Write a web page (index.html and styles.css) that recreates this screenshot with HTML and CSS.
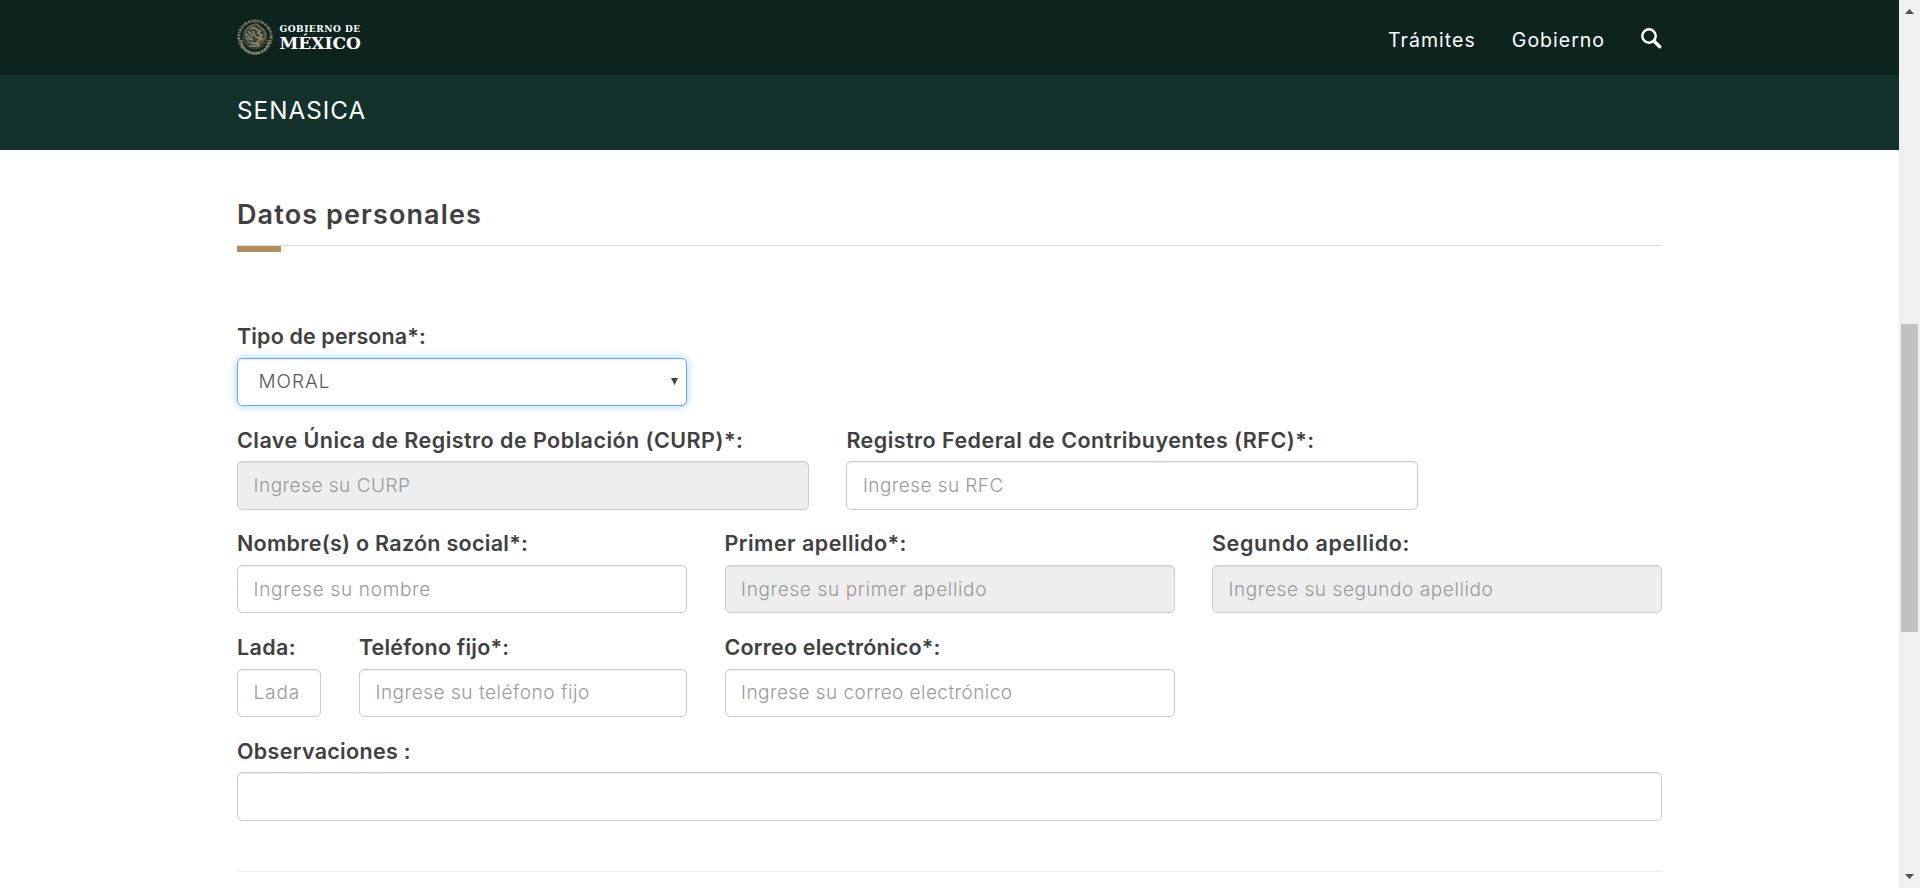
FILE: index.html
```html
<!DOCTYPE html>
<html lang="es">
<head>
<meta charset="utf-8">
<title>Datos personales</title>
<link rel="stylesheet" href="styles.css">
</head>
<body>
<div class="page">
  <header class="topbar">
    <div class="container topbar-in">
      <div class="brand">
        <svg class="seal" viewBox="0 0 36 36" fill="none">
          <circle cx="18" cy="18" r="12.500" fill="#3b4236"/>
          <circle cx="18" cy="18" r="16.200" stroke="#78755f" stroke-width="2.800" stroke-dasharray="2.100 .8 1.200 .6 3 .9"/>
          <path d="M4.500 21a13.500 13.500 0 0 0 27 0" stroke="#8c876e" stroke-width="2" stroke-dasharray="2.500 .9"/>
          <path d="M8 13c1-4 5-7 9-7 1-2 4-1 5 1l2 2c4 2 5 6 4 10l-3 4-4 2-5-1c-4 0-7-3-7-6z" stroke="#6e6c58" stroke-width="1.300"/>
          <path d="M13 10c3-2 6-1 7 1l3 1-2 2c3 1 4 4 2 7l-3 2 2 3M11 12l5 5M9 15l6 4M10 19l6 2M16 12l2 5 4 3M22 14l4 3M21 18l5 2M14 24l8 1M12 27h11" stroke="#8f8a70" stroke-width="1.500"/>
        </svg>
        <div class="wordmark"><span class="wm-small">GOBIERNO DE</span><span class="wm-big">MÉXICO</span></div>
      </div>
      <nav class="nav">
        <a class="nav-link">Trámites</a>
        <a class="nav-link nav-gob">Gobierno</a>
        <svg class="search" viewBox="0 0 21 21" fill="none" stroke="#fff"><circle cx="8" cy="8" r="6.700" stroke-width="2.500"/><path d="M13 13l5.700 5.700" stroke-width="3.400" stroke-linecap="round"/></svg>
      </nav>
    </div>
  </header>
  <div class="subbar"><div class="container subbar-in">SENASICA</div></div>
  <main class="container main">
    <h3 class="title">Datos personales</h3>
    <hr class="rule">
    <div class="accent"></div>
    <form class="form">
      <div class="field c4"><label class="label t-tipo">Tipo de persona*:</label>
        <div class="control focused"><span class="value">MORAL</span><svg class="arrow" viewBox="0 0 7 7"><path d="M0 0h7L3.500 7z" fill="#444"/></svg></div></div>
      <div class="field c5 first"><label class="label t-wide">Clave Única de Registro de Población (CURP)*:</label><input class="control s-5" disabled placeholder="Ingrese su CURP"></div>
      <div class="field c5"><label class="label t-wide">Registro Federal de Contribuyentes (RFC)*:</label><input class="control s-4" placeholder="Ingrese su RFC"></div>
      <div class="field c4 first"><label class="label t-nombre">Nombre(s) o Razón social*:</label><input class="control s-7" placeholder="Ingrese su nombre"></div>
      <div class="field c4"><label class="label t-wide">Primer apellido*:</label><input class="control s-65" disabled placeholder="Ingrese su primer apellido"></div>
      <div class="field c4"><label class="label t-seg">Segundo apellido:</label><input class="control s-6" disabled placeholder="Ingrese su segundo apellido"></div>
      <div class="field c1 first"><label class="label t-lada">Lada:</label><input class="control s-9" placeholder="Lada"></div>
      <div class="field c3"><label class="label t-tel">Teléfono fijo*:</label><input class="control s-55" placeholder="Ingrese su teléfono fijo"></div>
      <div class="field c4"><label class="label t-tel">Correo electrónico*:</label><input class="control s-4" placeholder="Ingrese su correo electrónico"></div>
      <div class="field c12"><label class="label t-obs">Observaciones :</label><input class="control"></div>
    </form>
    <hr class="rule bottom">
  </main>
</div>
<aside class="scrollbar">
  <svg class="sb-arrow" viewBox="0 0 9 5"><path d="M0 5L4.500 0 9 5z" fill="#505050"/></svg>
  <div class="thumb"></div>
  <svg class="sb-arrow down" viewBox="0 0 9 5"><path d="M0 0h9L4.500 5z" fill="#505050"/></svg>
</aside>
</body>
</html>
```
FILE: styles.css
```css
* { box-sizing: border-box; }
body { margin: 0; height: 888px; display: flex; overflow: hidden; background: #fff; color: #404041; font-family: Inter, sans-serif; }
.page { flex: 1; }
.container { width: 1425px; margin: 0 auto; }
.topbar { height: 75px; background: #0d231e; }
.topbar-in { display: flex; justify-content: space-between; }
.brand { display: flex; padding-top: 19px; gap: 6.500px; }
.seal { width: 36px; height: 36px; }
.wordmark { display: flex; flex-direction: column; color: #fff; font-family: "DejaVu Serif", serif; font-weight: 700; padding-top: 5px; }
.wm-small { font-size: 9px; line-height: 10px; letter-spacing: .5px; }
.wm-big { font-size: 17px; line-height: 18px; }
.nav { display: flex; color: #fff; padding-top: 28px; }
.nav-link { font-size: 19.500px; line-height: 24px; letter-spacing: 1.05px; }
.nav-gob { margin-left: 36px; letter-spacing: 1px; }
.search { width: 21px; height: 21px; margin-left: 36px; }
.subbar { height: 75px; background: #13322b; color: #fff; }
.subbar-in { padding-top: 21px; font-size: 24.200px; line-height: 30px; letter-spacing: 1.050px; }
.main { height: 738px; }
.title { margin: 0; padding-top: 47px; font-size: 27px; line-height: 36px; letter-spacing: 1.120px; font-weight: 600; }
.rule { margin: 12px 0 0; border: 0; height: 1px; background: #ddd; }
.accent { width: 44px; height: 6px; background: #b38e5d; }
.form { display: grid; grid-template-columns: repeat(12, 1fr); column-gap: 37.500px; row-gap: 22.700px; margin-top: 73px; }
.field { display: flex; flex-direction: column; min-width: 0; height: 81px; }
.label { height: 32.500px; line-height: 23px; font-size: 21.500px; font-weight: 600; white-space: nowrap; }
.control { width: 100%; height: 48.500px; border: 1px solid #ccc; border-radius: 5px; background: #fff; box-shadow: inset 0 1px 1px rgba(0,0,0,.075); padding: 0 15px 0 15.500px; color: #555; font: 300 19px Inter, sans-serif; }
.control:disabled { background: #eee; }
.control::placeholder { color: #999; opacity: 1; }
.focused { display: flex; align-items: center; justify-content: space-between; border-color: #66afe9; box-shadow: inset 0 1px 1px rgba(0,0,0,.075), 0 0 8px rgba(102,175,233,.6); padding: 0 8px 0 20.500px; }
.value { letter-spacing: .98px; }
.arrow { width: 7px; height: 7px; }
.c1 { grid-column-end: span 1; }
.c3 { grid-column-end: span 3; }
.c4 { grid-column-end: span 4; }
.c5 { grid-column-end: span 5; }
.c12 { grid-column-end: span 12; }
.first { grid-column-start: 1; }
.t-tipo { letter-spacing: .13px; }
.t-wide { letter-spacing: .46px; }
.t-nombre { letter-spacing: .28px; }
.t-seg { letter-spacing: .64px; }
.t-lada { letter-spacing: .38px; }
.t-tel { letter-spacing: .2px; }
.t-obs { letter-spacing: .31px; }
.s-4 { letter-spacing: .44px; }
.s-5 { letter-spacing: .5px; }
.s-55 { letter-spacing: .54px; }
.s-6 { letter-spacing: .58px; }
.s-65 { letter-spacing: .65px; }
.s-7 { letter-spacing: .7px; }
.s-9 { letter-spacing: .87px; }
.bottom { margin-top: 50px; background: #eee; }
.scrollbar { width: 21px; height: 888px; background: #f0f0f0; display: flex; flex-direction: column; padding: 9px 2px; }
.sb-arrow { width: 9px; height: 5px; margin-left: 4px; }
.thumb { width: 17px; height: 308px; margin-top: 310px; background: #c1c1c1; }
.down { margin-top: auto; }
```
